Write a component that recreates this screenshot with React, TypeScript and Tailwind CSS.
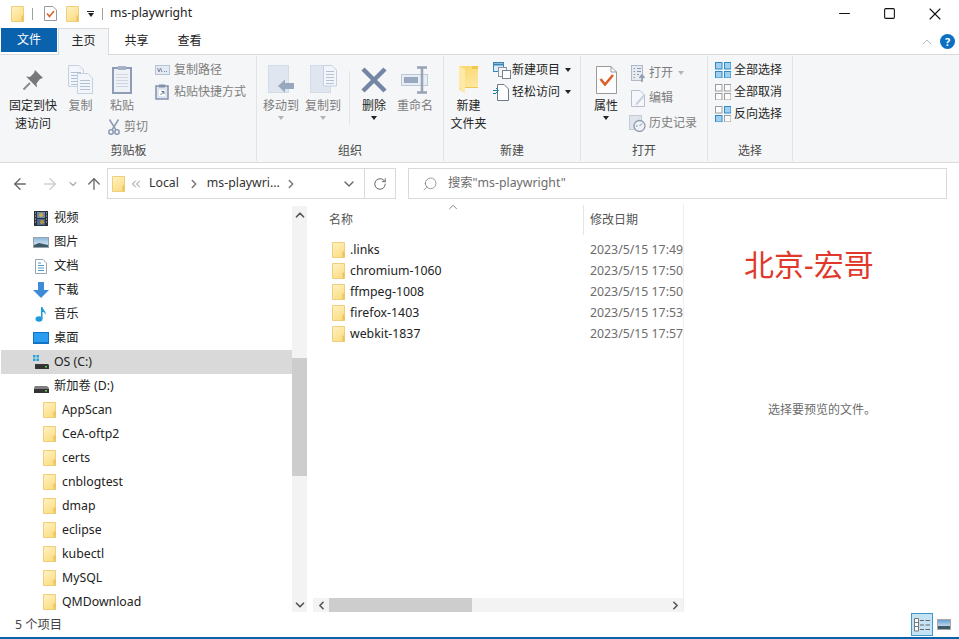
import { ReactNode } from "react";
import { ArrowLeft, ArrowRight, ArrowUp, ChevronDown, ChevronLeft, ChevronRight, ChevronUp, ChevronsLeft, RotateCw, Search, Minus, Square, X } from "lucide-react";

function Folder({ className = "w-[13px] h-[16px]" }: { className?: string }) {
  return (
    <svg viewBox="0 0 13 16" className={`shrink-0 ${className}`}>
      <defs>
        <linearGradient id="folderFill" x1="0" y1="0" x2="0.6" y2="1">
          <stop offset="0" stopColor="#fff3c4" />
          <stop offset="1" stopColor="#fbdd85" />
        </linearGradient>
      </defs>
      <path d="M0.5 0.5H12.5V15.5H0.5Z" fill="url(#folderFill)" stroke="#efcf7c" />
      <path d="M10.5 10V15.5H12.5V9Z" fill="#eec25b" />
    </svg>
  );
}

function Caret({ dark }: { dark?: boolean }) {
  return <div className={`w-0 h-0 border-x-[3.5px] border-x-transparent border-t-[4px] ${dark ? "border-t-[#222]" : "border-t-[#b4b4b4]"}`} />;
}

const PinIcon = () => (
  <svg viewBox="0 0 22 22" className="w-[22px] h-[22px]">
    <path d="M13 1 21 9 18 10 14.500 14.500 15 18.500 4 7.500 8 8 12 4Z" fill="#77787c" />
    <path d="M8 14 1.500 20.500" stroke="#8a8b8f" strokeWidth="2" />
  </svg>
);

const Page = ({ x, y, w, h }: { x: number; y: number; w: number; h: number }) => (
  <g>
    <path d={`M${x + 0.5} ${y + 0.5}H${x + w - 5}L${x + w - 0.5} ${y + 5}V${y + h - 0.5}H${x + 0.5}Z`} fill="#f2f5f9" stroke="#c5d0e0" />
    {[7, 10, 13, 16, 19].filter((l) => l < h - 2).map((l) => (
      <path key={l} d={`M${x + 3} ${y + l + 0.5}H${x + w - 3}`} stroke="#b3bfd2" />
    ))}
  </g>
);

const CopyIcon = () => (
  <svg viewBox="0 0 25 29" className="w-[25px] h-[29px]">
    <Page x={0} y={0} w={16} h={22} />
    <Page x={9} y={8} w={16} h={21} />
  </svg>
);

const PasteIcon = () => (
  <svg viewBox="0 0 20 29" className="w-[20px] h-[29px]">
    <rect x="1" y="3" width="18" height="25" fill="#eef1f6" stroke="#8e9cb6" strokeWidth="2" />
    <rect x="6" y="1" width="8" height="4" fill="#a6b1c6" />
    {[9, 12, 15, 18, 21].map((l) => (
      <path key={l} d={`M4 ${l + 0.5}H16`} stroke="#cdd5e2" />
    ))}
  </svg>
);

const CutIcon = () => (
  <svg viewBox="0 0 12 16" className="w-[12px] h-[16px]" fill="none" stroke="#8c9ab3" strokeWidth="1.500">
    <path d="M1.500 0.500 8 11M10.500 0.500 4 11" />
    <circle cx="3" cy="13" r="2.200" />
    <circle cx="9" cy="13" r="2.200" />
  </svg>
);

const CopyPathIcon = () => (
  <svg viewBox="0 0 15 10" className="w-[15px] h-[10px]">
    <rect x="0.500" y="0.500" width="14" height="9" fill="#e4e9f2" stroke="#b7c3d6" />
    <path d="M2.500 3 4 7 5.500 3 7 7M9 6.500H10M11 6.500H12" stroke="#7d8ba5" fill="none" />
  </svg>
);

const PasteLinkIcon = () => (
  <svg viewBox="0 0 14 16" className="w-[14px] h-[16px]">
    <rect x="1" y="2" width="12" height="13" fill="#dfe5ee" stroke="#8291ad" strokeWidth="1.500" />
    <rect x="4" y="0.500" width="6" height="3" fill="#8291ad" />
    <rect x="4" y="6" width="6" height="6" fill="#fff" />
    <path d="M5.500 11 8.500 8M6.500 7.500H9V10" stroke="#5e6d88" fill="none" />
  </svg>
);

const MoveToIcon = () => (
  <svg viewBox="0 0 27 29" className="w-[27px] h-[29px]">
    <rect x="0.500" y="0.500" width="20" height="27" fill="#dfe6f0" stroke="#d2dbe8" />
    <path d="M10 21 17 14.500V18H26V24H17V27.500Z" fill="#97a8bf" />
  </svg>
);

const CopyToIcon = () => (
  <svg viewBox="0 0 27 29" className="w-[27px] h-[29px]">
    <rect x="0.500" y="0.500" width="20" height="27" fill="#dfe6f0" stroke="#d2dbe8" />
    <path d="M13.500 0.500H22L26.500 5V21H13.500Z" fill="#f2f5f9" stroke="#c5d0e0" />
    {[6, 9, 12, 15, 18].map((l) => (
      <path key={l} d={`M16 ${l + 0.5}H24`} stroke="#b3bfd2" />
    ))}
  </svg>
);

const DeleteIcon = () => (
  <svg viewBox="0 0 26 26" className="w-[26px] h-[26px]">
    <path d="M2 2 24 24M24 2 2 24" stroke="#7486a3" strokeWidth="4.500" />
  </svg>
);

const RenameIcon = () => (
  <svg viewBox="0 0 29 28" className="w-[29px] h-[28px]">
    <rect x="0.500" y="8.500" width="26" height="11" fill="#e8edf4" stroke="#bcc8d9" />
    <rect x="3" y="11" width="14" height="6" fill="#97a8bf" />
    <path d="M16 1.500H26M16 26.500H26M21 1.500V26.500" stroke="#98a3b5" strokeWidth="2.500" fill="none" />
  </svg>
);

const BigFolderIcon = () => (
  <svg viewBox="0 0 19 27" className="w-[19px] h-[27px]">
    <defs>
      <linearGradient id="bigFolder" x1="0" y1="0" x2="0.3" y2="1">
        <stop offset="0" stopColor="#fbd768" />
        <stop offset="1" stopColor="#fde9a8" />
      </linearGradient>
    </defs>
    <path d="M0 0H13L19 0V22H6V27L0 23Z" fill="#f3c652" />
    <path d="M0 0H13V3H19V21H6V27L0 22Z" fill="url(#bigFolder)" />
    <path d="M6 3V27L0 22V0Z" fill="#fee9a6" />
  </svg>
);

const NewItemIcon = () => (
  <svg viewBox="0 0 18 17" className="w-[18px] h-[17px]">
    <rect x="0.500" y="0.500" width="10" height="9" fill="#dcecf7" stroke="#3c87ba" />
    <path d="M1 2.500H10" stroke="#3c87ba" strokeWidth="2" />
    <rect x="5.500" y="5.500" width="8" height="9" fill="#f4f6f8" stroke="#8a95a5" />
    <rect x="9.500" y="8.500" width="8" height="8" fill="#fff" stroke="#77828f" />
  </svg>
);

const EasyAccessIcon = () => (
  <svg viewBox="0 0 16 17" className="w-[16px] h-[17px]">
    <path d="M4.500 0.500H11L15.500 5V16.500H4.500Z" fill="#fff" stroke="#6f7a88" />
    <path d="M0 6.500H5M3 4 5.500 6.500 3 9M0 9.500H3" stroke="#1f7ea6" fill="none" />
  </svg>
);

const PropsIcon = () => (
  <svg viewBox="0 0 21 28" className="w-[21px] h-[28px]">
    <path d="M0.500 0.500H15L20.500 6V27.500H0.500Z" fill="#fdfdfd" stroke="#9a9a9a" />
    <path d="M15 0.500V6H20.500" fill="none" stroke="#9a9a9a" />
    <path d="M4.500 13 9 18.500 17 9" fill="none" stroke="#dd5f28" strokeWidth="2.500" />
  </svg>
);

const OpenIcon = () => (
  <svg viewBox="0 0 15 17" className="w-[15px] h-[17px]">
    <rect x="0.500" y="0.500" width="11" height="15" fill="#e6eaf1" stroke="#b1b9c7" />
    <path d="M2.500 3.500H4M2.500 6.500H4M2.500 9.500H4M2.500 12.500H4M6 3.500H10M6 6.500H10M6 9.500H8" stroke="#8e99ac" />
    <path d="M11 17V11M8.500 13 11 10 13.500 13" stroke="#8e99ac" strokeWidth="1.500" fill="none" />
  </svg>
);

const EditIcon = () => (
  <svg viewBox="0 0 15 17" className="w-[15px] h-[17px]">
    <path d="M0.500 0.500H9L13.500 5V16.500H0.500Z" fill="#f5f7fa" stroke="#b5bfcf" />
    <path d="M5 13 13 4 14.500 5.500 6.500 14.500 4.500 15Z" fill="#c6d0de" />
  </svg>
);

const HistoryIcon = () => (
  <svg viewBox="0 0 17 17" className="w-[17px] h-[17px] -ml-[2px]">
    <rect x="0.500" y="0.500" width="12" height="14" fill="#dfe4ec" stroke="#c4ccd8" />
    <circle cx="10.500" cy="11" r="5.500" fill="#eef1f5" stroke="#8e99ac" strokeWidth="1.300" />
    <path d="M10.500 11 13 8.500M7 11H8.500" stroke="#7d899d" />
  </svg>
);

const Tiles = ({ on }: { on: boolean[] }) => (
  <svg viewBox="0 0 16 16" className="w-[16px] h-[16px]">
    {[
      [0, 0],
      [9, 0],
      [0, 9],
      [9, 9],
    ].map(([x, y], i) => (
      <rect key={i} x={x + 0.5} y={y + 0.5} width="6.500" height="6.500" fill={on[i] ? "#9fd0f0" : "#fbfbfb"} stroke={on[i] ? "#2f8ac7" : "#9d9d9d"} />
    ))}
  </svg>
);

const VideoIcon = () => (
  <svg viewBox="0 0 14 15" className="w-[14px] h-[15px] ml-[1px]">
    <rect width="14" height="15" fill="#2c3038" />
    <rect x="3" y="1" width="8" height="6" fill="#6a8bb0" />
    <rect x="3" y="8" width="8" height="6" fill="#4d6a96" />
    <circle cx="7" cy="4" r="2" fill="#d8a838" />
    <circle cx="8" cy="11" r="2" fill="#b8953c" />
    <path d="M1 2H2M1 5H2M1 8H2M1 11H2M12 2H13M12 5H13M12 8H13M12 11H13" stroke="#ddd" />
  </svg>
);

const PictureIcon = () => (
  <svg viewBox="0 0 16 11" className="w-[16px] h-[11px]">
    <defs>
      <linearGradient id="sky" x1="0" y1="0" x2="0" y2="1">
        <stop offset="0" stopColor="#8ab8dc" />
        <stop offset="1" stopColor="#e8f0f6" />
      </linearGradient>
    </defs>
    <rect x="0.500" y="0.500" width="15" height="10" fill="url(#sky)" stroke="#9aa3ad" />
    <path d="M1 8 6 6 15 8V10H1Z" fill="#3d5a66" />
  </svg>
);

const DocIcon = () => (
  <svg viewBox="0 0 12 15" className="w-[12px] h-[15px] ml-[2px]">
    <path d="M0.500 0.500H8L11.500 4V14.500H0.500Z" fill="#fff" stroke="#98a4b3" />
    <path d="M3 4H6M3 6.500H9M3 9H9M3 11.500H9" stroke="#4e9ac8" />
  </svg>
);

const DownloadIcon = () => (
  <svg viewBox="0 0 16 16" className="w-[16px] h-[16px]">
    <path d="M5 0H11V8H16L8 16 0 8H5Z" fill="#3f8ad8" />
  </svg>
);

const MusicIcon = () => (
  <svg viewBox="0 0 12 16" className="w-[12px] h-[16px] ml-[2px]">
    <ellipse cx="4" cy="13" rx="3.500" ry="2.800" fill="#1f9ae0" />
    <path d="M6 1H7.500C8 4 11.500 5 10.500 9 10 6.500 8.500 6 7.500 6V13H6Z" fill="#1f9ae0" />
  </svg>
);

const DesktopIcon = () => (
  <svg viewBox="0 0 16 12" className="w-[16px] h-[12px]">
    <rect width="16" height="12" fill="#0f74c6" />
    <rect x="1" y="1" width="14" height="9" fill="#2b9cee" />
  </svg>
);

const DriveIcon = ({ win }: { win?: boolean }) => (
  <svg viewBox="0 0 16 14" className="w-[16px] h-[14px]">
    {win && (
      <g fill="#21a5de">
        <rect x="0" y="0" width="2.500" height="2.500" />
        <rect x="3.500" y="0" width="2.500" height="2.500" />
        <rect x="0" y="3.500" width="2.500" height="2.500" />
        <rect x="3.500" y="3.500" width="2.500" height="2.500" />
      </g>
    )}
    <path d={win ? "M2 9H15L16 10V14H2Z" : "M2 7H14L16 9V14H1V9Z"} fill={win ? "#3a3a3a" : "#7f7f7f"} />
    <rect x={win ? 3 : 1} y="10" width={win ? 12 : 15} height="4" fill="#333" />
    <rect x="12" y="11" width="2" height="1.500" fill="#5dd14f" />
  </svg>
);

function LargeButton({ icon, label, width, disabled, caret }: { icon: ReactNode; label: ReactNode; width: string; disabled?: boolean; caret?: "light" | "dark" }) {
  return (
    <div className={`flex flex-col items-center shrink-0 ${width}`}>
      <div className="h-[35px] flex items-center justify-center">{icon}</div>
      <div className={`text-center leading-[18px] whitespace-nowrap ${disabled ? "text-[#7d7d7d]" : "text-[#262626]"}`}>{label}</div>
      {caret && (
        <div className="mt-[1px]">
          <Caret dark={caret === "dark"} />
        </div>
      )}
    </div>
  );
}

function SmallButton({ icon, label, iconWidth, disabled, caret }: { icon: ReactNode; label: string; iconWidth: string; disabled?: boolean; caret?: "light" | "dark" }) {
  return (
    <div className="flex items-center h-[22px] whitespace-nowrap">
      <div className={`flex items-center justify-start shrink-0 ${iconWidth}`}>{icon}</div>
      <span className={disabled ? "text-[#7d7d7d]" : "text-[#262626]"}>{label}</span>
      {caret && (
        <div className="ml-[5px]">
          <Caret dark={caret === "dark"} />
        </div>
      )}
    </div>
  );
}

function Group({ width, label, children }: { width: string; label: string; children: ReactNode }) {
  return (
    <div className={`flex flex-col shrink-0 mt-[1px] mb-[1px] border-r border-[#e2e3e5] ${width}`}>
      <div className="flex-1 flex items-start">{children}</div>
      <div className="h-[18px] mb-[1px] text-center leading-[18px] text-[#4a4a4a]">{label}</div>
    </div>
  );
}

function Ribbon() {
  return (
    <div className="h-[109px] flex shrink-0 pl-[1px] bg-[#f5f6f7] border-y border-[#dadbdc]">
      <Group width="w-[256px]" label="剪贴板">
        <div className="flex pl-[4px] pt-[6px]">
          <LargeButton
            width="w-[56px]"
            icon={<PinIcon />}
            label={
              <>
                固定到快
                <br />
                速访问
              </>
            }
          />
          <LargeButton width="w-[39px]" icon={<CopyIcon />} label="复制" disabled />
          <div className="w-[55px] shrink-0 flex flex-col">
            <LargeButton width="w-[44px]" icon={<PasteIcon />} label="粘贴" disabled />
            <div className="flex items-center gap-[4px] ml-[8px] mt-[3px] h-[18px] whitespace-nowrap text-[#7d7d7d]">
              <CutIcon />
              <span>剪切</span>
            </div>
          </div>
          <div className="flex flex-col -mt-[3px]">
            <SmallButton iconWidth="w-[19px]" icon={<CopyPathIcon />} label="复制路径" disabled />
            <SmallButton iconWidth="w-[19px]" icon={<PasteLinkIcon />} label="粘贴快捷方式" disabled />
          </div>
        </div>
      </Group>
      <Group width="w-[187px]" label="组织">
        <div className="flex pt-[6px] pl-[3px]">
          <LargeButton width="w-[42px]" icon={<MoveToIcon />} label="移动到" disabled caret="light" />
          <LargeButton width="w-[42px]" icon={<CopyToIcon />} label="复制到" disabled caret="light" />
          <div className="w-px h-[54px] mt-[9px] ml-[5px] mr-[4px] bg-[#e2e3e5]" />
          <LargeButton width="w-[40px]" icon={<DeleteIcon />} label="删除" caret="dark" />
          <LargeButton width="w-[42px]" icon={<RenameIcon />} label="重命名" disabled />
        </div>
      </Group>
      <Group width="w-[137px]" label="新建">
        <div className="flex pt-[6px]">
          <LargeButton
            width="w-[49px]"
            icon={<BigFolderIcon />}
            label={
              <>
                新建
                <br />
                文件夹
              </>
            }
          />
          <div className="flex flex-col -mt-[3px]">
            <SmallButton iconWidth="w-[19px]" icon={<NewItemIcon />} label="新建项目" caret="dark" />
            <SmallButton iconWidth="w-[19px]" icon={<EasyAccessIcon />} label="轻松访问" caret="dark" />
          </div>
        </div>
      </Group>
      <Group width="w-[127px]" label="打开">
        <div className="flex pt-[6px]">
          <LargeButton width="w-[50px]" icon={<PropsIcon />} label="属性" caret="dark" />
          <div className="flex flex-col gap-[3px]">
            <SmallButton iconWidth="w-[18px]" icon={<OpenIcon />} label="打开" disabled caret="light" />
            <SmallButton iconWidth="w-[18px]" icon={<EditIcon />} label="编辑" disabled />
            <SmallButton iconWidth="w-[18px]" icon={<HistoryIcon />} label="历史记录" disabled />
          </div>
        </div>
      </Group>
      <Group width="w-[85px]" label="选择">
        <div className="flex flex-col pl-[7px] pt-[3px]">
          <SmallButton iconWidth="w-[19px]" icon={<Tiles on={[true, true, true, true]} />} label="全部选择" />
          <SmallButton iconWidth="w-[19px]" icon={<Tiles on={[false, false, false, false]} />} label="全部取消" />
          <SmallButton iconWidth="w-[19px]" icon={<Tiles on={[false, true, true, false]} />} label="反向选择" />
        </div>
      </Group>
    </div>
  );
}

function TitleBar() {
  return (
    <div className="h-[27px] flex items-center shrink-0 pl-[11px]">
      <Folder />
      <div className="w-px h-[12px] bg-[#a0a0a0] ml-[8px]" />
      <svg viewBox="0 0 13 15" className="w-[13px] h-[15px] ml-[11px]">
        <path d="M0.500 0.500H9L12.500 4V14.500H0.500Z" fill="#fff" stroke="#9a9a9a" />
        <path d="M3 7.500 5.500 10.500 10 5" fill="none" stroke="#dd5f28" strokeWidth="1.500" />
      </svg>
      <div className="ml-[9px]">
        <Folder />
      </div>
      <div className="ml-[8px] flex flex-col items-center gap-[1px]">
        <div className="w-[7px] h-px bg-[#222]" />
        <Caret dark />
      </div>
      <div className="w-px h-[12px] bg-[#a0a0a0] ml-[8px]" />
      <span className="ml-[7px] text-[12.200px] text-[#222]">ms-playwright</span>
      <div className="ml-auto flex items-center">
        <div className="w-[46px] flex justify-center">
          <Minus size={17} strokeWidth={1.500} className="text-[#111]" />
        </div>
        <div className="w-[45px] flex justify-center">
          <Square size={13} strokeWidth={2} className="text-[#111]" />
        </div>
        <div className="w-[46px] flex justify-center mr-[1px]">
          <X size={20} strokeWidth={1.300} className="text-[#111]" />
        </div>
      </div>
    </div>
  );
}

function Tabs() {
  return (
    <div className="h-[28px] flex shrink-0 pl-[1px] pt-[1px] -mb-px">
      <div className="w-[56px] mb-[3px] flex items-center justify-center bg-[#0a62ad] text-white">文件</div>
      <div className="w-[51px] ml-[1px] pb-[2px] flex items-center justify-center bg-[#f5f6f7] border-x border-t border-[#dadbdc] text-[#222] relative z-10">主页</div>
      <div className="w-[55px] pb-[2px] flex items-center justify-center text-[#222]">共享</div>
      <div className="w-[51px] pb-[2px] flex items-center justify-center text-[#222]">查看</div>
      <div className="ml-auto flex items-center mr-[4px] gap-[5px]">
        <ChevronUp size={16} strokeWidth={1.200} className="text-[#a8a8a8]" />
        <div className="w-[15px] h-[15px] rounded-full bg-[#0b6fc2] flex items-center justify-center text-white text-[11px] font-bold leading-none">?</div>
      </div>
    </div>
  );
}

function AddressBar() {
  return (
    <div className="h-[41px] flex items-center shrink-0 pl-[5px]">
      <div className="w-[30px] flex justify-center">
        <ArrowLeft size={18} strokeWidth={1.800} className="text-[#6a6a6a]" />
      </div>
      <div className="w-[30px] flex justify-center">
        <ArrowRight size={18} strokeWidth={1.800} className="text-[#cfcfcf]" />
      </div>
      <div className="w-[16px] flex justify-center">
        <ChevronDown size={12} strokeWidth={2.500} className="text-[#b0b0b0]" />
      </div>
      <div className="w-[26px] flex justify-center">
        <ArrowUp size={18} strokeWidth={1.800} className="text-[#6a6a6a]" />
      </div>
      <div className="w-[289px] h-[31px] flex items-center border border-[#d9d9d9] pl-[4px] text-[#333]">
        <Folder />
        <ChevronsLeft size={14} strokeWidth={1.500} className="ml-[4px] text-[#777]" />
        <span className="ml-[6px] text-[12.300px]">Local</span>
        <ChevronRight size={14} strokeWidth={2.500} className="ml-[8px] text-[#777]" />
        <span className="ml-[6px] text-[12.300px]">ms-playwri...</span>
        <ChevronRight size={14} strokeWidth={2.500} className="ml-[4px] text-[#777]" />
        <div className="ml-auto w-[30px] flex justify-center">
          <ChevronDown size={16} strokeWidth={2} className="text-[#666]" />
        </div>
        <div className="w-[31px] h-full border-l border-[#d9d9d9] flex items-center justify-center">
          <RotateCw size={14} strokeWidth={1.700} className="text-[#666]" />
        </div>
      </div>
      <div className="w-[539px] h-[31px] ml-[12px] flex items-center border border-[#d9d9d9] pl-[13px] text-[#6d6d6d]">
        <Search size={16} strokeWidth={1.100} className="text-[#777] -scale-x-100" />
        <span className="ml-[10px] text-[12.300px]">搜索"ms-playwright"</span>
      </div>
    </div>
  );
}

const navItems: { icon: ReactNode; label: string; selected?: boolean }[] = [
  { icon: <VideoIcon />, label: "视频" },
  { icon: <PictureIcon />, label: "图片" },
  { icon: <DocIcon />, label: "文档" },
  { icon: <DownloadIcon />, label: "下载" },
  { icon: <MusicIcon />, label: "音乐" },
  { icon: <DesktopIcon />, label: "桌面" },
  { icon: <DriveIcon win />, label: "OS (C:)", selected: true },
  { icon: <DriveIcon />, label: "新加卷 (D:)" },
];

const navFolders = ["AppScan", "CeA-oftp2", "certs", "cnblogtest", "dmap", "eclipse", "kubectl", "MySQL", "QMDownload"];

function NavPane() {
  return (
    <div className="w-[292px] shrink-0 pt-[2px] pl-px overflow-hidden text-[12.300px] text-[#222]">
      {navItems.map((item) => (
        <div key={item.label} className={`h-[24px] flex items-center ${item.selected ? "bg-[#d9d9d9]" : ""}`}>
          <div className="w-[21px] ml-[32px] flex justify-start shrink-0">{item.icon}</div>
          <span>{item.label}</span>
        </div>
      ))}
      {navFolders.map((name) => (
        <div key={name} className="h-[24px] flex items-center pl-[42px]">
          <Folder />
          <span className="ml-[6px]">{name}</span>
        </div>
      ))}
    </div>
  );
}

function NavScrollbar() {
  return (
    <div className="w-[15px] shrink-0 mt-[2px] flex flex-col bg-[#f3f3f3]">
      <div className="h-[152px] flex justify-center pt-[2px]">
        <ChevronUp size={14} strokeWidth={3} className="text-[#555]" />
      </div>
      <div className="h-[118px] bg-[#cdcdcd]" />
      <div className="flex-1 flex justify-center items-end">
        <ChevronDown size={14} strokeWidth={3} className="text-[#555]" />
      </div>
    </div>
  );
}

const files = [
  { name: ".links", date: "2023/5/15 17:49" },
  { name: "chromium-1060", date: "2023/5/15 17:50" },
  { name: "ffmpeg-1008", date: "2023/5/15 17:50" },
  { name: "firefox-1403", date: "2023/5/15 17:53" },
  { name: "webkit-1837", date: "2023/5/15 17:57" },
];

function FileList() {
  return (
    <div className="w-[375px] shrink-0 flex flex-col relative">
      <ChevronUp size={14} strokeWidth={1.500} className="absolute left-[138px] -top-[4px] text-[#777]" />
      <div className="h-[30px] mt-[1px] mb-[5px] flex items-center text-[#555]">
        <div className="w-[276px] h-full flex items-center pl-[21px] border-r border-[#e5e5e5]">名称</div>
        <div className="pl-[6px]">修改日期</div>
      </div>
      <div className="flex flex-col">
        {files.map((f) => (
          <div key={f.name} className="h-[21px] flex items-center overflow-hidden text-[12.300px] whitespace-nowrap">
            <div className="w-[282px] shrink-0 pl-[24px] flex items-center text-[#222]">
              <Folder />
              <span className="ml-[5px]">{f.name}</span>
            </div>
            <span className="text-[#6d6d6d]">{f.date}</span>
          </div>
        ))}
      </div>
      <div className="mt-auto ml-[5px] h-[14px] flex items-center bg-[#f3f3f3]">
        <div className="w-[16px] flex justify-center">
          <ChevronLeft size={13} strokeWidth={3} className="text-[#555]" />
        </div>
        <div className="w-[143px] h-full bg-[#cdcdcd]" />
        <div className="ml-auto w-[16px] flex justify-center">
          <ChevronRight size={13} strokeWidth={3} className="text-[#555]" />
        </div>
      </div>
    </div>
  );
}

function PreviewPane() {
  return (
    <div className="flex-1 flex items-center justify-center relative border-l border-[#eeeeee] text-[#6d6d6d]">
      <span className="pl-[1px] pt-[4px]">选择要预览的文件。</span>
      <div className="absolute left-[60px] top-[39px] text-[30px] leading-[44px] text-[#e0392c] whitespace-nowrap">北京-宏哥</div>
    </div>
  );
}

function StatusBar() {
  return (
    <>
      <div className="h-[25px] flex items-center shrink-0 pl-[15px] text-[12.300px] text-[#444]">
        <span className="pt-[2px]">5 个项目</span>
        <div className="ml-auto flex items-center mr-[8px] gap-[4px]">
          <div className="w-[22px] h-[23px] bg-[#c4e4f5] border border-[#3f9ac9] flex items-center justify-center">
            <svg viewBox="0 0 16 14" className="w-[16px] h-[14px]">
              <path d="M0.500 0.500H4.500V4.500H0.500ZM0.500 4.500H4.500V8.500H0.500ZM0.500 8.500H4.500V13H0.500Z" fill="#fff" stroke="#777" />
              <path d="M6 2.500H10M11.500 2.500H16M6 7H10M11.500 7H16M6 11.500H10M11.500 11.500H16" stroke="#666" />
            </svg>
          </div>
          <div className="w-[14px] h-[11px] border border-[#a8a8a8] bg-gradient-to-b from-[#6aa0d0] to-[#e8f0f6] flex flex-col justify-end">
            <div className="h-[3px] bg-[#3d5a66]" />
          </div>
        </div>
      </div>
      <div className="h-[2px] bg-[#0a62ad] shrink-0" />
    </>
  );
}

export default function App() {
  return (
    <div className="w-[959px] h-[639px] flex flex-col overflow-hidden bg-white text-xs [font-family:'Noto_Sans','Noto_Sans_CJK_SC',sans-serif]">
      <TitleBar />
      <Tabs />
      <Ribbon />
      <AddressBar />
      <div className="h-[408px] flex shrink-0">
        <NavPane />
        <NavScrollbar />
        <div className="w-[1px] shrink-0" />
        <FileList />
        <PreviewPane />
      </div>
      <StatusBar />
    </div>
  );
}
